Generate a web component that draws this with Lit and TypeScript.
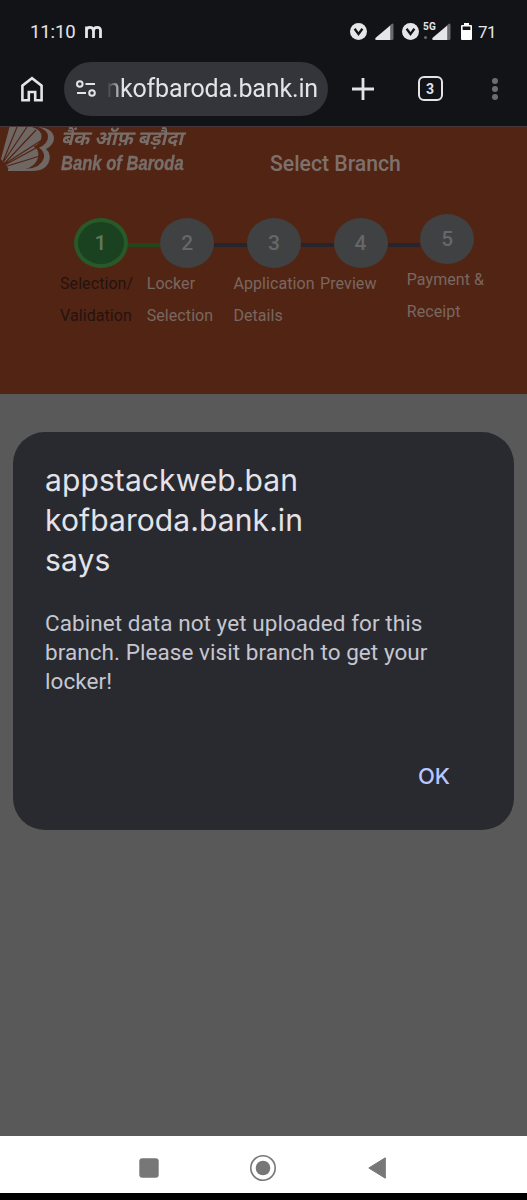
import { LitElement, html, css } from "lit";
import { customElement } from "lit/decorators.js";

interface Step { label: string[]; state: string; link: string }

const STEPS: Step[] = [
  { label: ["Selection/", "Validation"], state: "active", link: "done" },
  { label: ["Locker", "Selection"], state: "", link: "todo" },
  { label: ["Application", "Details"], state: "", link: "todo" },
  { label: ["Preview"], state: "", link: "todo" },
  { label: ["Payment &", "Receipt"], state: "last", link: "" },
];

const vpn = html`<svg class="vpn" width="17" height="17" viewBox="0 0 17 17">
  <circle cx="8.5" cy="8.5" r="8.5" fill="#e6e6e8"/>
  <path d="M4.600 5.800 8.500 11l3.900-5.200" fill="none" stroke="#121317" stroke-width="2.300"/></svg>`;

const signal = html`<svg class="signal" width="19" height="17" viewBox="0 0 19 17">
  <path d="M14 3.500 16.500 1Q18.500-.2 18.500 2v13.500q0 1.500-1.500 1.500h-3z" fill="#69696d"/>
  <path d="M1.500 17H15.200V2.400L.7 14.800Q-.6 16.800 1.500 17z" fill="#e6e6e8"/></svg>`;

@customElement("status-bar")
class StatusBar extends LitElement {
  static styles = css`
    :host { display: flex; align-items: center; height: 63px; box-sizing: border-box; padding: 0 32px 0 30px;
      font-family: Roboto, sans-serif; color: #e6e6e8; }
    .time { font-size: 18.5px; letter-spacing: -.1px; width: 55px; white-space: nowrap; font-weight: 400; }
    .spacer { flex: 1; }
    .first { margin-right: 8px; }
    .signal { display: block; }
    .vpn { display: block; margin-right: 8px; }
    .sig2 { display: flex; position: relative; margin-left: 5px; }
    .g5 { position: absolute; left: -9px; top: -1px; font-size: 10px; line-height: 10px; font-weight: 700; letter-spacing: .2px; }
    .dot { position: absolute; left: -8px; top: 13px; width: 3px; height: 3px; border-radius: 2px; background: #69696d; }
    .battery { margin: 0 6px 0 10px; display: block; }
    .pct { font-size: 17px; width: 17px; white-space: nowrap; line-height: 20px; letter-spacing: -.6px; padding-top: 1px; }
  `;
  render() {
    return html`<span class="time">11:10</span>
      <svg width="17" height="14" viewBox="0 0 17 14"><path d="M1.500 13V5.800q0-3.400 3.400-3.400t3.600 3.400V13M8.500 5.800q0-3.400 3.600-3.400t3.400 3.400V13M1.500 13V1.400" fill="none" stroke="#e6e6e8" stroke-width="2.800"/></svg>
      <span class="spacer"></span>
      ${vpn}<span class="first">${signal}</span>${vpn}
      <span class="sig2">${signal}<span class="g5">5G</span><span class="dot"></span></span>
      <svg class="battery" width="11" height="17" viewBox="0 0 11 17"><path fill-rule="evenodd" d="M3 0h5v2h2q1 0 1 1v13q0 1-1 1H1q-1 0-1-1V3q0-1 1-1h2zM1.600 3.600V7h7.800V3.600z" fill="#fff"/></svg>
      <span class="pct">71</span>`;
  }
}

@customElement("browser-bar")
class BrowserBar extends LitElement {
  static styles = css`
    :host { display: flex; align-items: center; height: 63px; box-sizing: border-box; padding: 0 29.5px 12px 20px; color: #e3e3e8; }
    svg { display: block; flex: none; }
    .home { margin-right: 20px; }
    .url { width: 264px; height: 54px; border-radius: 27px; background: #34353a; display: flex; align-items: center;
      box-sizing: border-box; padding-left: 12px; flex: none; }
    .host { margin-left: 11px; width: 211px; height: 40px; display: flex; justify-content: flex-end;
      font: 400 25px/40px Roboto, sans-serif; letter-spacing: -.15px; white-space: nowrap;
      -webkit-mask-image: linear-gradient(90deg, transparent 0, #000 16px); mask-image: linear-gradient(90deg, transparent 0, #000 16px); }
    .plus { margin-left: 24px; }
    .tabs { margin-left: 43.5px; width: 25px; height: 25px; box-sizing: border-box; border: 2.5px solid #e3e3e8; border-radius: 6px;
      display: flex; align-items: center; justify-content: center; font: 700 14px/1 Roboto, sans-serif; }
    .menu { margin-left: auto; }
  `;
  render() {
    return html`
      <svg class="home" width="24" height="26" viewBox="0 0 24 26"><path d="M2.400 24.200V9.700L12 2.200l9.600 7.500v14.500h-6.400v-8.200H8.800v8.200z" fill="none" stroke="#e3e3e8" stroke-width="2.600"/></svg>
      <div class="url">
        <svg width="20" height="18" viewBox="0 0 20 18" fill="none" stroke="#e3e3e8" stroke-width="2"><circle cx="3.800" cy="4" r="2.800"/><path d="M9.500 4H19M1 13h9"/><circle cx="16" cy="13" r="2.800"/></svg>
        <span class="host">nkofbaroda.bank.in</span>
      </div>
      <svg class="plus" width="22" height="22" viewBox="0 0 22 22"><path d="M11 0v22M0 11h22" stroke="#e3e3e8" stroke-width="2.800"/></svg>
      <span class="tabs">3</span>
      <svg class="menu" width="6" height="24" viewBox="0 0 6 24" fill="#6c6d72"><circle cx="3" cy="4" r="3"/><circle cx="3" cy="12" r="3"/><circle cx="3" cy="20" r="3"/></svg>`;
  }
}

@customElement("bank-header")
class BankHeader extends LitElement {
  static styles = css`
    :host { display: block; height: 268px; box-sizing: border-box; background: #522414; border-top: 1px solid #49363a;
      font-family: Roboto, sans-serif; color: #7a6e69; }
    .brand { display: flex; height: 87px; }
    .mark { display: block; flex: none; }
    .names { margin-left: 7px; width: 209px; color: #776e69; white-space: nowrap; }
    .hi { font: italic 700 20px/24px "Noto Sans Devanagari", "Noto Sans", sans-serif; height: 24px; padding-top: 1px;
      transform: scaleX(.97); transform-origin: 0 0; }
    .en { font: italic 700 21px/24px "Liberation Sans", sans-serif; transform: scaleX(.79); transform-origin: 0 0; margin-top: -1px;
      -webkit-text-stroke: .4px #776e69; }
    .title { font-size: 21.2px; line-height: 26px; font-weight: 500; margin-top: 24px; white-space: nowrap; color: #7d716d; }
    .steps { display: grid; grid-template-columns: repeat(5, 86.7px); padding-left: 60px; }
    .step { padding-top: 4px; }
    .step.last { padding-top: 0; }
    .row { display: flex; align-items: center; padding-left: 13.5px; }
    .circle { width: 54px; height: 50px; border-radius: 50%; box-sizing: border-box; background: #3f4142; color: #656769;
      display: flex; align-items: center; justify-content: center; font-size: 21px; font-weight: 500; flex: none; }
    .active .circle { background: #1a4220; border: 4px solid #285a29; color: #61785f; }
    .link { height: 4px; flex: 1; margin-top: 4px; margin-right: -13.5px; }
    .done { background: #1f4719; }
    .todo { background: #25252d; }
    .label { font-size: 16px; line-height: 32px; letter-spacing: .08px; white-space: nowrap; color: #786860; }
    .active .label { color: #24130f; }
  `;
  render() {
    return html`
      <div class="brand">
        <svg class="mark" width="54" height="46" viewBox="0 0 54 46">
          <path d="M9.500 0H32Q42 3 41.500 10q-1 7-8 9.500Q40 23 38 31q-3 9-14 11.500L9 42 4.500 37 1 32z" fill="#6f6763"/>
          <path d="M38 0Q53 1 54 11q0 7-8 11 5 5 3.500 11-3 11-17 11H8v-2.200H27q14-1 17-11 1-6-5-10 9-4 9-11 0-7-10-9.800z" fill="#6f6763"/>
          <g stroke="#522414" stroke-width="1.200"><path d="M2 37 17 0M2 37 27 0M3 38 36 3M3 38 42 13M3 39 36 21M4 40 40 29"/></g>
        </svg>
        <div class="names"><div class="hi">बैंक ऑफ़ बड़ौदा</div><div class="en">Bank of Baroda</div></div>
        <div class="title">Select Branch</div>
      </div>
      <div class="steps">${STEPS.map((s, i) => html`
        <div class="step ${s.state}">
          <div class="row"><span class="circle">${i + 1}</span>${s.link ? html`<span class="link ${s.link}"></span>` : ""}</div>
          <div class="label">${s.label.map(l => html`<div>${l}</div>`)}</div>
        </div>`)}</div>`;
  }
}

@customElement("site-alert")
class SiteAlert extends LitElement {
  static styles = css`
    :host { display: block; height: 398px; box-sizing: border-box; border-radius: 32px; background: #292a2f; padding: 28px 32px; }
    .title { font: 400 30px/40px Inter, sans-serif; letter-spacing: .1px; color: #e3e3e9; white-space: nowrap; }
    .body { font: 400 22.5px/29px Roboto, sans-serif; letter-spacing: .06px; color: #c5c6d0; margin-top: 29px; white-space: nowrap; }
    .actions { display: flex; justify-content: flex-end; margin-top: 66px; padding-right: 32px; }
    .ok { font: 500 22px/28px Inter, sans-serif; color: #b9c6ff; }
  `;
  render() {
    return html`
      <div class="title"><div>appstackweb.ban</div><div>kofbaroda.bank.in</div><div>says</div></div>
      <div class="body"><div>Cabinet data not yet uploaded for this</div><div>branch. Please visit branch to get your</div><div>locker!</div></div>
      <div class="actions"><span class="ok">OK</span></div>`;
  }
}

@customElement("app-root")
class AppRoot extends LitElement {
  static styles = css`
    :host { display: flex; flex-direction: column; width: 527px; height: 1200px; overflow: hidden; background: #595959; }
    .chrome { background: #121317; height: 126px; flex: none; }
    .page { flex: 1; padding: 38px 13px 0; }
    .nav { height: 57px; background: #fff; display: flex; align-items: center; padding: 6px 141px 0 139px; box-sizing: border-box;
      justify-content: space-between; }
    .edge { height: 7px; background: #000; }
  `;
  render() {
    return html`
      <div class="chrome"><status-bar></status-bar><browser-bar></browser-bar></div>
      <bank-header></bank-header>
      <div class="page"><site-alert></site-alert></div>
      <div class="nav">
        <svg width="20" height="20"><rect x=".3" y=".3" width="19.400" height="19.400" rx="3" fill="#777"/></svg>
        <svg width="26" height="26"><circle cx="13" cy="13" r="12.200" fill="none" stroke="#777" stroke-width="1.600"/><circle cx="13" cy="13" r="7.300" fill="#777"/></svg>
        <svg width="19" height="24"><path d="M1.800 12 18.300 1.800v20.400z" fill="#777" stroke="#777" stroke-linejoin="round"/></svg>
      </div>
      <div class="edge"></div>`;
  }
}
